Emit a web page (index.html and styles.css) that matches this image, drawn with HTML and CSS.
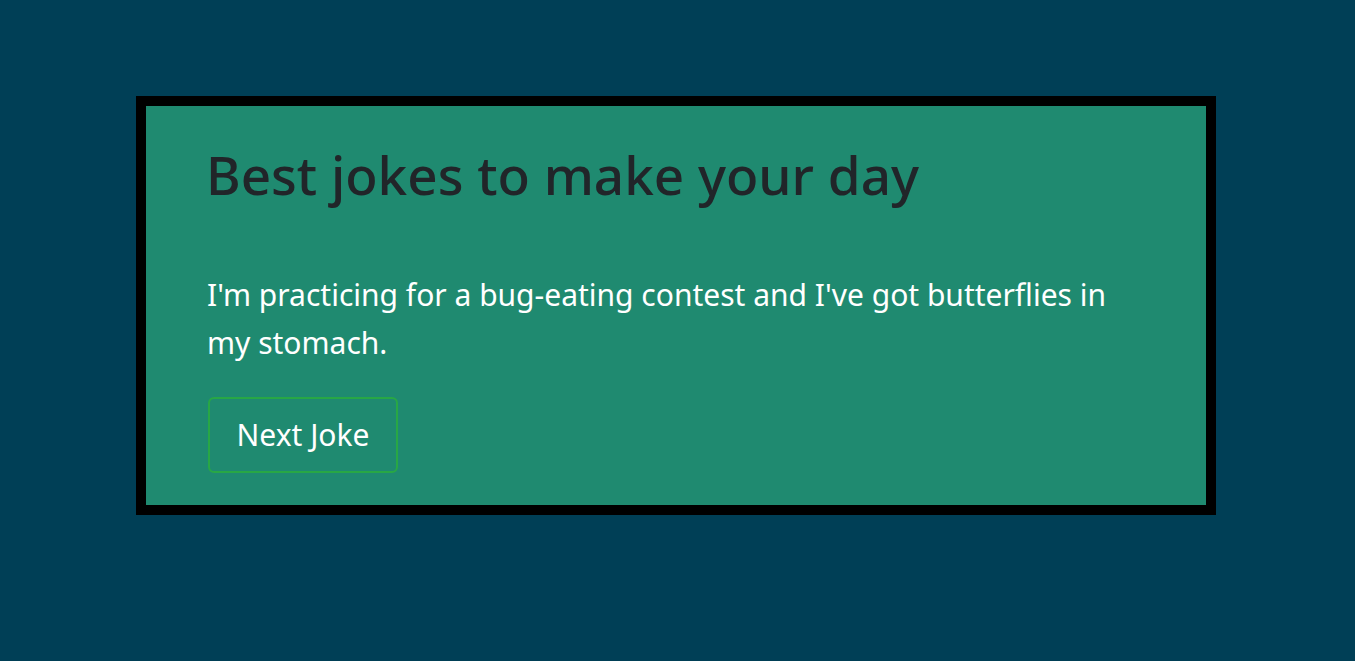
FILE: index.html
```html
<!DOCTYPE html>
<html>
<head>
<meta charset="utf-8">
<link rel="stylesheet" href="styles.css">
</head>
<body>
<div class="box">
  <h1 class="title">Best jokes to make your day</h1>
  <p class="joke">I'm practicing for a bug-eating contest and I've got butterflies in my stomach.</p>
  <button class="btn">Next Joke</button>
</div>
</body>
</html>
```
FILE: styles.css
```css
html, body { margin: 0; padding: 0; }
body {
  background: #003f56;
  font-family: "Noto Sans", "Open Sans", sans-serif;
  min-height: 661px;
  padding: 96px 3px 0 0;
  box-sizing: border-box;
}
.box {
  width: 1080px;
  margin: 0 auto;
  box-sizing: border-box;
  border: 10px solid #000;
  background: #1f8a70;
  padding: 37px 61px 31px 62px;
  height: 419px;
}
.title {
  margin: 0 0 0 -2px;
  color: #212529;
  font-size: 53px;
  font-weight: 500;
  line-height: 1.2;
}
.joke {
  margin: 64px 0 30px -1px;
  color: #fff;
  font-size: 30px;
  line-height: 48px;
  max-width: 920px;
}
.btn {
  font-family: inherit;
  box-sizing: border-box;
  background: transparent;
  color: #fff;
  border: 2px solid #28a745;
  border-radius: 6px;
  font-size: 30px;
  padding: 0;
  height: 76px;
  width: 190px;
}
```
